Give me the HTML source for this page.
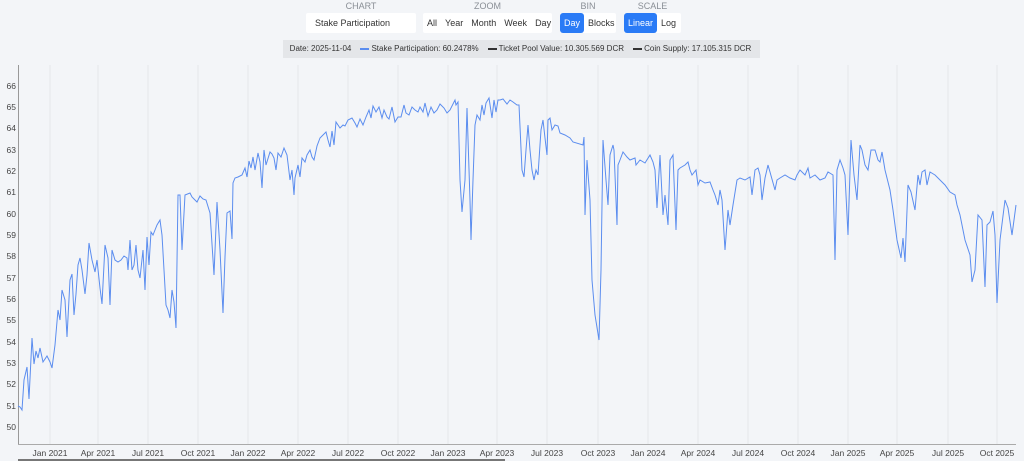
<!DOCTYPE html>
<html><head><meta charset="utf-8"><style>
body{margin:0;width:1024px;height:461px;background:#f3f5f8;font-family:"Liberation Sans",sans-serif;overflow:hidden;position:relative}
.lbl{position:absolute;top:1px;font-size:9px;color:#8a8f96;text-align:center}
.box{position:absolute;top:13px;height:20px;background:#fff;font-size:9px;color:#333;display:flex;align-items:center;border-radius:2px}
.box span{padding:0 4px;height:20px;line-height:20px}
.on{background:#2a7bf6;color:#fff;border-radius:3px}
.leg{position:absolute;left:283px;top:40px;width:477px;height:18px;background:#e4e6e9;font-size:8px;color:#333;line-height:18px;white-space:nowrap}
</style></head><body>
<div class="lbl" style="left:306px;width:110px">CHART</div>
<div class="lbl" style="left:423px;width:129px">ZOOM</div>
<div class="lbl" style="left:560px;width:56px">BIN</div>
<div class="lbl" style="left:624px;width:57px">SCALE</div>
<div class="box" style="left:306px;width:110px"><span style="padding-left:9px">Stake Participation</span></div>
<div class="box" style="left:423px;width:129px;justify-content:space-around"><span>All</span><span>Year</span><span>Month</span><span>Week</span><span>Day</span></div>
<div class="box" style="left:560px;width:56px"><span class="on">Day</span><span>Blocks</span></div>
<div class="box" style="left:624px;width:57px"><span class="on">Linear</span><span>Log</span></div>
<div class="leg">&nbsp;&nbsp;&nbsp;Date: 2025-11-04 &nbsp;&nbsp;&nbsp;<b style="display:inline-block;width:9px;height:1.5px;background:#5b8def;vertical-align:middle"></b> Stake Participation: 60.2478% &nbsp;&nbsp;&nbsp;<b style="display:inline-block;width:9px;height:1.5px;background:#333;vertical-align:middle"></b> Ticket Pool Value: 10.305.569 DCR &nbsp;&nbsp;&nbsp;<b style="display:inline-block;width:9px;height:1.5px;background:#333;vertical-align:middle"></b> Coin Supply: 17.105.315 DCR</div>
<svg width="1024" height="461" style="position:absolute;left:0;top:0">
<g stroke="#e4e7ea" stroke-width="1">
<line x1="50" y1="65" x2="50" y2="444"/><line x1="98" y1="65" x2="98" y2="444"/><line x1="148" y1="65" x2="148" y2="444"/><line x1="198" y1="65" x2="198" y2="444"/><line x1="248" y1="65" x2="248" y2="444"/><line x1="298" y1="65" x2="298" y2="444"/><line x1="348" y1="65" x2="348" y2="444"/><line x1="398" y1="65" x2="398" y2="444"/><line x1="448" y1="65" x2="448" y2="444"/><line x1="497" y1="65" x2="497" y2="444"/><line x1="547" y1="65" x2="547" y2="444"/><line x1="598" y1="65" x2="598" y2="444"/><line x1="648" y1="65" x2="648" y2="444"/><line x1="698" y1="65" x2="698" y2="444"/><line x1="748" y1="65" x2="748" y2="444"/><line x1="798" y1="65" x2="798" y2="444"/><line x1="848" y1="65" x2="848" y2="444"/><line x1="897" y1="65" x2="897" y2="444"/><line x1="948" y1="65" x2="948" y2="444"/><line x1="997" y1="65" x2="997" y2="444"/>
</g>
<line x1="18.5" y1="65" x2="18.5" y2="444" stroke="#999"/>
<line x1="18" y1="444.5" x2="1016" y2="444.5" stroke="#aaa"/>
<rect x="18" y="459" width="487" height="2" fill="#777"/>
<polyline fill="none" stroke="#5b8def" stroke-width="1" points="18,406 20,407 22,410 24,380 27,367 29,399 32,338 34,364 36,351 38,358 40,348 43,362 47,356 50,362 52,368 55,345 58,310 60,320 62,290 65,300 67,337 70,280 72,274 74,315 76,294 78,265 80,258 82,270 85,294 87,275 89,243 92,260 95,272 97,260 100,288 102,304 105,245 108,258 110,305 112,250 115,260 118,262 121,260 124,256 127,258 128,270 130,240 132,270 134,265 136,245 138,270 140,278 143,250 145,290 147,237 149,265 151,232 153,235 155,230 157,225 160,220 162,235 164,270 166,305 168,310 170,318 172,290 174,302 176,328 178,195 180,195 182,250 185,195 190,193 192,197 195,200 197,202 200,196 203,199 206,200 210,213 214,275 217,202 220,250 223,313 225,257 227,213 230,211 232,239 233,183 235,178 238,177 242,175 245,168 247,177 249,161 251,168 253,157 255,170 258,153 260,162 262,188 264,150 266,165 270,152 272,154 274,158 276,170 278,153 281,157 284,148 287,155 290,180 292,170 294,195 295,178 298,165 300,177 302,158 305,162 307,155 310,150 312,157 314,160 317,146 320,138 323,135 326,132 328,140 330,147 332,131 334,145 336,122 340,128 343,125 345,126 348,120 352,118 355,123 357,127 360,119 363,125 366,117 369,110 371,118 373,106 376,112 379,107 382,118 384,110 387,117 389,119 392,107 395,122 398,117 401,117 404,105 406,113 409,115 412,107 415,110 418,112 420,107 423,112 425,103 428,116 431,107 434,113 437,110 440,104 444,108 447,113 450,110 455,100 456,105 458,102 460,180 462,212 465,180 467,108 470,200 471,240 473,180 475,125 477,115 480,120 482,105 484,115 486,103 489,98 492,118 494,100 496,112 498,100 500,100 503,99 507,104 510,100 513,102 517,105 519,105 522,170 524,177 526,150 528,125 530,150 532,170 534,180 536,170 538,175 541,130 543,120 545,138 547,155 548,120 550,118 552,130 555,125 558,126 560,133 565,135 570,138 573,142 583,145 584,137 585,215 587,160 590,200 592,280 595,315 599,340 601,270 603,140 606,180 608,205 610,155 613,145 614,150 617,225 618,165 620,160 623,152 627,157 630,160 635,158 636,165 640,160 645,163 650,155 653,162 655,170 657,208 660,155 663,215 665,195 668,225 670,160 673,155 676,230 678,170 680,168 685,165 688,162 690,170 692,175 696,170 698,185 700,180 705,183 710,182 713,190 715,195 718,205 720,190 722,200 725,250 728,210 730,225 733,205 737,180 740,178 745,180 750,177 752,195 755,170 758,168 760,175 762,200 765,178 768,165 770,172 775,190 777,180 780,178 785,175 790,178 795,180 797,175 800,170 805,175 808,168 810,178 815,175 820,180 825,178 828,172 833,175 835,260 837,170 840,160 843,168 845,175 848,235 851,140 854,175 857,200 860,145 862,150 865,165 868,170 871,150 875,150 878,160 880,162 882,152 885,170 890,190 893,210 897,240 901,258 903,238 905,262 908,185 911,192 915,210 918,175 920,185 922,172 925,170 927,185 930,172 935,175 940,180 945,185 950,192 955,195 957,205 960,215 965,240 970,255 972,282 975,270 978,215 982,220 985,287 987,225 990,222 993,211 995,235 997,303 1000,240 1005,200 1008,208 1012,235 1016,205"/>
<g font-size="8.5" fill="#444" font-family="Liberation Sans,sans-serif" text-anchor="end">
<text x="16" y="89">66</text><text x="16" y="110">65</text><text x="16" y="131">64</text><text x="16" y="153">63</text><text x="16" y="174">62</text><text x="16" y="195">61</text><text x="16" y="217">60</text><text x="16" y="238">59</text><text x="16" y="259">58</text><text x="16" y="281">57</text><text x="16" y="302">56</text><text x="16" y="323">55</text><text x="16" y="345">54</text><text x="16" y="366">53</text><text x="16" y="387">52</text><text x="16" y="409">51</text><text x="16" y="430">50</text>
</g>
<g font-size="8.5" fill="#444" font-family="Liberation Sans,sans-serif" text-anchor="middle">
<text x="50" y="456">Jan 2021</text><text x="98" y="456">Apr 2021</text><text x="148" y="456">Jul 2021</text><text x="198" y="456">Oct 2021</text><text x="248" y="456">Jan 2022</text><text x="298" y="456">Apr 2022</text><text x="348" y="456">Jul 2022</text><text x="398" y="456">Oct 2022</text><text x="448" y="456">Jan 2023</text><text x="497" y="456">Apr 2023</text><text x="547" y="456">Jul 2023</text><text x="598" y="456">Oct 2023</text><text x="648" y="456">Jan 2024</text><text x="698" y="456">Apr 2024</text><text x="748" y="456">Jul 2024</text><text x="798" y="456">Oct 2024</text><text x="848" y="456">Jan 2025</text><text x="897" y="456">Apr 2025</text><text x="948" y="456">Jul 2025</text><text x="997" y="456">Oct 2025</text>
</g>
</svg>
</body></html>
